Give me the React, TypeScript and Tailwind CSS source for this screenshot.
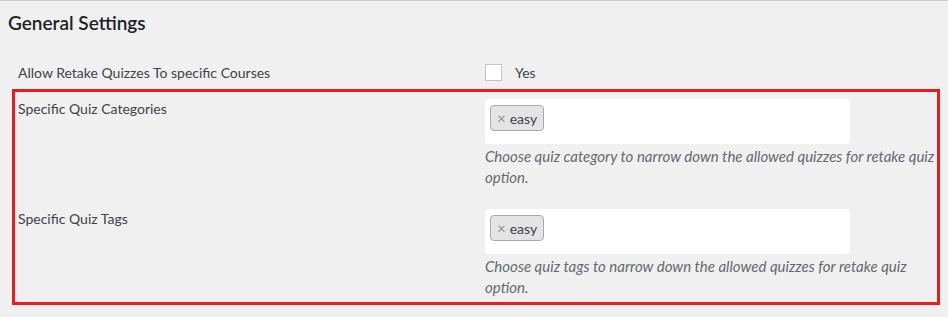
function Tag() {
  return (
    <span className="inline-flex h-[26px] items-center gap-[4px] rounded-[4px] border border-[#aaaaaa] bg-[#e4e4e4] pl-[6px] pr-[6px] text-[14px] text-[#3c434a]">
      <span className="text-[15px] leading-none text-[#8c8f94]">×</span>
      easy
    </span>
  );
}

function TagInput() {
  return (
    <div className="flex h-[45px] w-[365px] items-start rounded-[4px] bg-white px-[5px] pt-[6px]">
      <Tag />
    </div>
  );
}

function Row({ label, help, top }: { label: string; help: string; top: string }) {
  return (
    <div className={`flex ${top}`}>
      <div className="w-[470px] shrink-0 pl-[3px] leading-[20px]">{label}</div>
      <div className="flex flex-col">
        <TagInput />
        <p className="mt-[2px] w-[452px] text-[15px] italic leading-[21px] text-[#646970]">{help}</p>
      </div>
    </div>
  );
}

export default function App() {
  return (
    <div
      className="h-[317px] w-[948px] border-t border-[#c5cbd9] bg-[#f0f0f1] text-[14px] text-[#3c434a]"
      style={{ fontFamily: "Lato, 'Liberation Sans', sans-serif" }}
    >
      <h2 className="pl-[8px] pt-[10px] text-[19px] font-semibold leading-[24px] text-[#1d2327]">
        General Settings
      </h2>

      <div className="mt-[27px] flex items-center">
        <div className="w-[485px] pl-[18px]">Allow Retake Quizzes To specific Courses</div>
        <label className="flex items-center gap-[13px]">
          <span className="h-[17px] w-[17px] border border-[#c3c4c7] bg-white" />
          Yes
        </label>
      </div>

      <div className="ml-[12px] mt-[6px] h-[216px] w-[928px] border-[3px] border-[#ed1c24] pt-[7px]">
        <Row
          top=""
          label="Specific Quiz Categories"
          help="Choose quiz category to narrow down the allowed quizzes for retake quiz option."
        />
        <Row
          top="mt-[21px]"
          label="Specific Quiz Tags"
          help="Choose quiz tags to narrow down the allowed quizzes for retake quiz option."
        />
      </div>
    </div>
  );
}
